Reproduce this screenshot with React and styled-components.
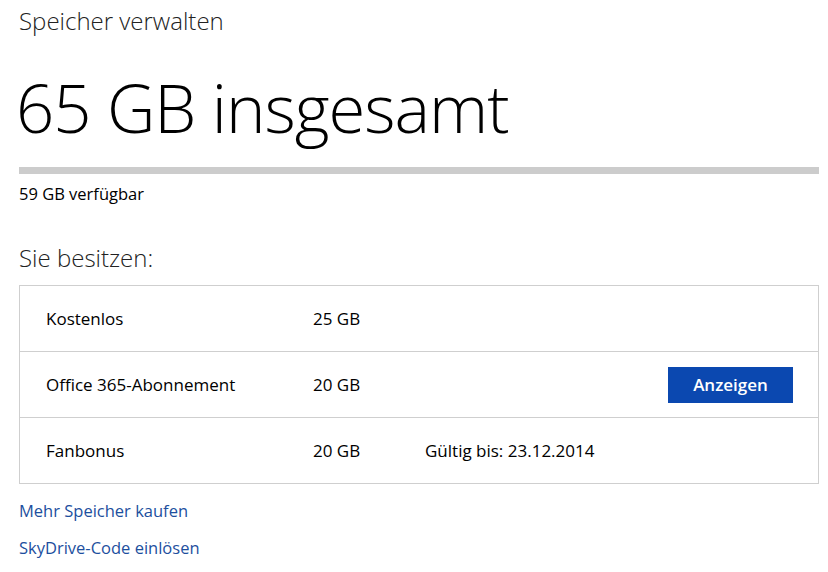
import React from "react";
import styled, { createGlobalStyle } from "styled-components";

const GlobalStyle = createGlobalStyle`
  body {
    margin: 0;
    background: #fff;
    font-family: "Open Sans", "Noto Sans", "Liberation Sans", sans-serif;
    color: #000;
  }
`;

const plans = [
  { name: "Kostenlos", size: "25 GB" },
  { name: "Office 365-Abonnement", size: "20 GB", action: "Anzeigen" },
  { name: "Fanbonus", size: "20 GB", note: "Gültig bis: 23.12.2014" },
];

const Page = styled.div`
  width: 800px;
  padding: 5px 0 0 19px;
`;

const PageTitle = styled.h2`
  margin: 0;
  font-size: 24px;
  font-weight: 300;
  line-height: 32px;
  color: #222;
`;

const Total = styled.h1`
  margin: 30px 0 0 -3px;
  font-size: 67px;
  font-weight: 300;
  line-height: 80px;
  letter-spacing: -1px;
`;

const Bar = styled.div`
  margin-top: 20px;
  height: 7px;
  background: #cccccc;
`;

const Free = styled.div`
  margin-top: 9px;
  font-size: 16.5px;
  line-height: 22px;
`;

const SectionTitle = styled.h3`
  margin: 38px 0 0;
  font-size: 24px;
  font-weight: 300;
  line-height: 30px;
  color: #222;
`;

const Table = styled.div`
  margin-top: 12px;
  border: 1px solid #cfcfcf;
`;

const Row = styled.div`
  display: grid;
  grid-template-columns: 267px 112px 1fr auto;
  align-items: center;
  height: 65px;
  padding: 0 25px 0 26px;
  font-size: 17px;
  border-top: ${(p) => (p.$first ? "none" : "1px solid #cfcfcf")};
`;

const Button = styled.button`
  width: 125px;
  height: 36px;
  border: none;
  background: #0b48b0;
  color: #fff;
  font-family: inherit;
  font-size: 17px;
  font-weight: 600;
  cursor: pointer;
`;

const Links = styled.div`
  display: flex;
  flex-direction: column;
  gap: 15px;
  margin-top: 16px;
`;

const Link = styled.a`
  color: #1d4f9e;
  font-size: 16.5px;
  line-height: 22px;
  text-decoration: none;
`;

export default function App() {
  return (
    <>
      <GlobalStyle />
      <Page>
        <PageTitle>Speicher verwalten</PageTitle>
        <Total>65 GB insgesamt</Total>
        <Bar />
        <Free>59 GB verfügbar</Free>
        <SectionTitle>Sie besitzen:</SectionTitle>
        <Table>
          {plans.map((p, i) => (
            <Row key={p.name} $first={i === 0}>
              <span>{p.name}</span>
              <span>{p.size}</span>
              <span>{p.note}</span>
              {p.action ? <Button>{p.action}</Button> : <span />}
            </Row>
          ))}
        </Table>
        <Links>
          <Link href="#">Mehr Speicher kaufen</Link>
          <Link href="#">SkyDrive-Code einlösen</Link>
        </Links>
      </Page>
    </>
  );
}
